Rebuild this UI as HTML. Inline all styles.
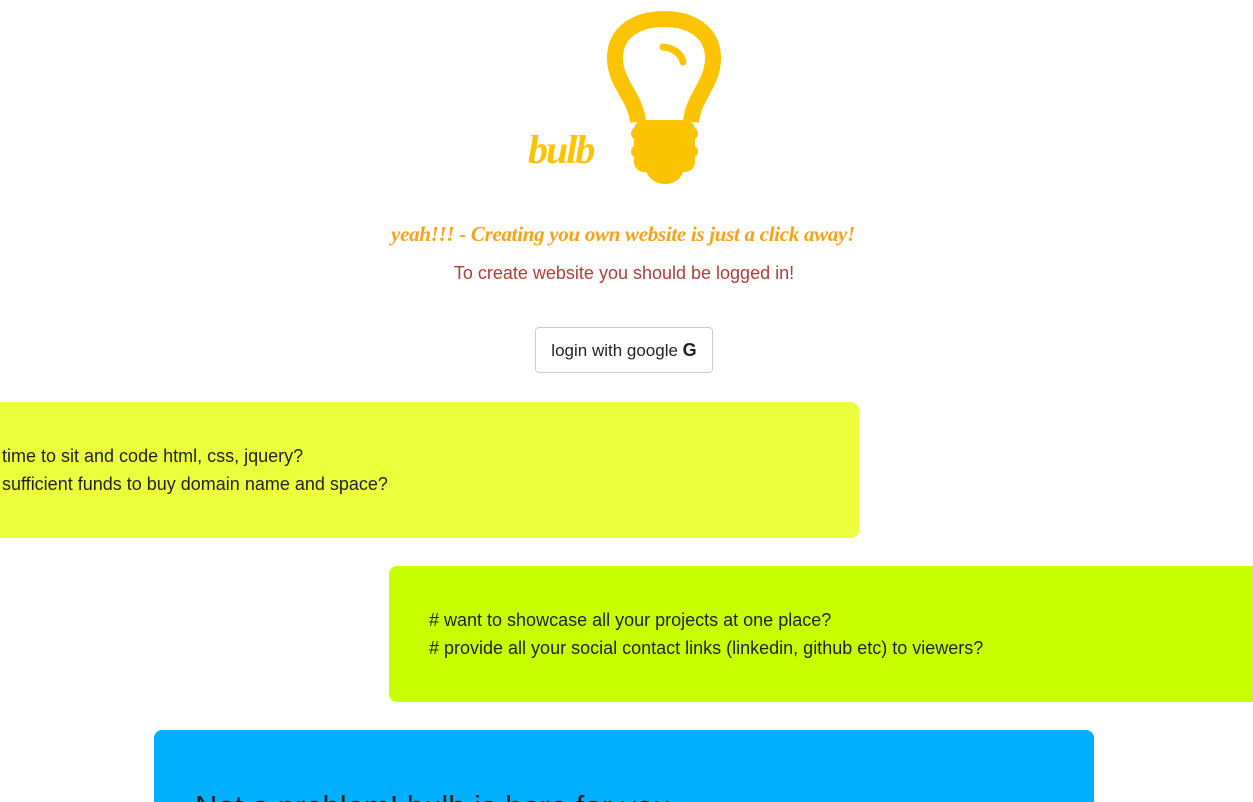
<!DOCTYPE html>
<html style="height:802px;overflow:hidden"><head><style>
body{margin:0;width:1253px;height:802px;overflow:hidden;background:#fff;font-family:"Liberation Sans",sans-serif;position:relative}
.abs{position:absolute}
.script{font-family:"Liberation Serif",serif;font-style:italic;font-weight:bold}
</style></head><body>
<div class="abs script" style="left:528px;top:126px;font-size:40px;color:#fcc300;letter-spacing:-2px">bulb</div>
<svg class="abs" style="left:600px;top:8px" width="130" height="180" viewBox="600 8 130 180">
<path d="M638 122 C636 97 615 84 615 58 C615 32 637 19 664 19 C691 19 713 32 713 58 C713 84 693 97 691 122" fill="none" stroke="#fcc300" stroke-width="16" stroke-linejoin="round"/>
<path d="M663 47 C673 48 681 53 683 62" fill="none" stroke="#fcc300" stroke-width="7" stroke-linecap="round"/>
<rect x="634" y="120" width="61" height="52" rx="10" fill="#fcc300"/>
<rect x="631" y="127" width="67" height="13" rx="6.5" fill="#fcc300"/>
<rect x="631" y="145" width="67" height="13" rx="6.5" fill="#fcc300"/>
<path d="M644 166 L685 166 C683 177 676 184 665 184 C654 184 647 177 644 166 Z" fill="#fcc300"/>
</svg>
<div class="abs script" style="left:0;width:1246px;text-align:center;top:222px;font-size:21px;color:#f7a21b;letter-spacing:-0.3px">yeah!!! - Creating you own website is just a click away!</div>
<div class="abs" style="left:0;width:1248px;text-align:center;top:263px;font-size:18px;color:#a9403a">To create website you should be logged in!</div>
<div class="abs" style="left:535px;top:327px;height:46px;border:1px solid #ccc;border-radius:4px;box-sizing:border-box;width:178px;text-align:center;line-height:44px;font-size:17px;color:#222">login with google <b style="font-size:18px">G</b></div>
<div class="abs" style="left:-20px;top:402px;width:879px;height:136px;background:#ebff3d;border-radius:8px"></div>
<div class="abs" style="left:2px;top:442px;font-size:18px;line-height:28px;color:#222">time to sit and code html, css, jquery?<br>sufficient funds to buy domain name and space?</div>
<div class="abs" style="left:389px;top:566px;width:900px;height:136px;background:#c8ff00;border-radius:8px"></div>
<div class="abs" style="left:429px;top:606px;font-size:18px;line-height:28px;color:#222"># want to showcase all your projects at one place?<br># provide all your social contact links (linkedin, github etc) to viewers?</div>
<div class="abs" style="left:154px;top:730px;width:940px;height:72px;background:#00b0ff;border-radius:8px 8px 0 0;overflow:hidden"><div style="position:absolute;left:41px;top:59px;font-size:31px;color:#222;white-space:nowrap">Not a problem! bulb is here for you</div></div>
</body></html>
